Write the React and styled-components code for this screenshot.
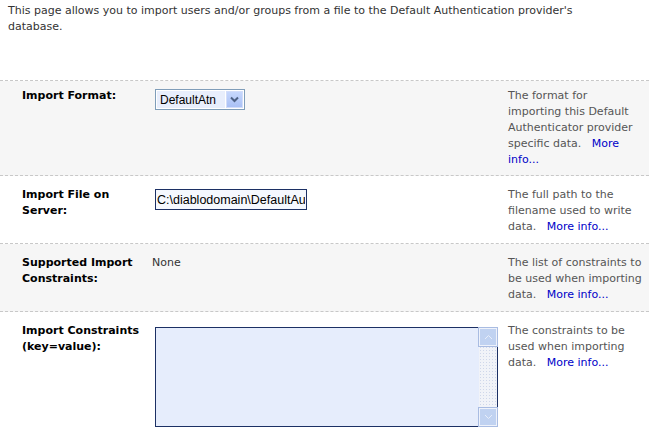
import React from 'react';
import styled, {createGlobalStyle} from 'styled-components';

const GlobalStyle = createGlobalStyle`
    body{
        margin: 0;
        background: #fff;
        font-family: "DejaVu Sans", Verdana, sans-serif;
        font-size: 11px;
    }
`;

const Page = styled.div`
    width: 649px;
`;

const Intro = styled.p`
    margin: 3px 8px 0;
    height: 77px;
    line-height: 16px;
    color: #333;
`;

const Form = styled.div`
    border-top: 1px dashed #c8c8c8;
`;

const Row = styled.div`
    display: grid;
    grid-template-columns: 130px 356px 1fr;
    padding: ${props => props.$first ? '7px' : '11px'} 0 ${props => props.$first ? '7px' : '8px'} 22px;
    background: ${props => props.$shaded ? '#f6f6f6' : '#fff'};
    border-bottom: 1px dashed #c8c8c8;
    line-height: 16px;
`;

const Label = styled.div`
    font-weight: bold;
    color: #000;
    white-space: nowrap;
`;

const Value = styled.div`
    color: #333;
`;

const Desc = styled.div`
    color: #555;
    white-space: nowrap;
`;

const MoreLink = styled.a`
    color: #0000c8;
    text-decoration: none;
`;

const SelectBox = styled.div`
    display: flex;
    align-items: center;
    box-sizing: border-box;
    width: 90px;
    height: 21px;
    margin: 1px 0 0 3px;
    padding: 1px;
    border: 1px solid #7f9db9;
    background: #fff;
    font-family: "Liberation Sans", Arial, sans-serif;
    font-size: 12px;
    color: #000;
`;

const SelectText = styled.span`
    flex: 1;
    align-self: stretch;
    display: flex;
    align-items: center;
    padding-left: 3px;
    background: #e8eefc;
`;

const DropButton = styled.span`
    display: flex;
    align-items: center;
    justify-content: center;
    width: 17px;
    height: 17px;
    margin-left: 1px;
    background: linear-gradient(#c6d7fd, #aac1f5);
    border: 1px solid #d2ddfa;
    box-sizing: border-box;
`;

const PathInput = styled.input`
    display: block;
    box-sizing: border-box;
    width: 152px;
    height: 21px;
    margin: 2px 0 0 3px;
    padding: 0 1px;
    border: 1px solid #1c3064;
    background: #f5f8fe;
    font-family: "Liberation Sans", Arial, sans-serif;
    font-size: 12.5px;
    color: #000;
    outline: none;
`;

const AreaBox = styled.div`
    display: flex;
    box-sizing: border-box;
    width: 343px;
    height: 100px;
    margin: 4px 0 0 3px;
    border: 1px solid #1c3064;
    background: #e6edfc;
`;

const TextArea = styled.textarea`
    flex: 1;
    border: none;
    background: transparent;
    resize: none;
    outline: none;
    padding: 2px;
`;

const ScrollRail = styled.div`
    display: flex;
    flex-direction: column;
    justify-content: space-between;
    width: 18px;
    background-color: #f1f3f8;
    background-image: radial-gradient(#cfd7ea 0.6px, transparent 0.8px);
    background-size: 3px 3px;
`;

const ScrollButton = styled.div`
    display: flex;
    align-items: center;
    justify-content: center;
    height: 18px;
    box-sizing: border-box;
    border: 1px solid #eef2fb;
    outline: 1px solid #a9bce2;
    background: #c0d2f1;
`;

function Chevron() {
    return (
        <svg width="9" height="7" viewBox="0 0 9 7">
            <path d="M1 1.5 L4.5 5 L8 1.5" fill="none" stroke="#4d6185" strokeWidth="2" />
        </svg>
    );
}

function FaintArrow({up}) {
    return (
        <svg width="9" height="6" viewBox="0 0 9 6">
            <path d={up ? 'M1 5 L4.5 1.5 L8 5' : 'M1 1 L4.5 4.5 L8 1'} fill="none" stroke="#e8eefa" strokeWidth="1" />
        </svg>
    );
}

function Info({children}) {
    return (
        <Desc>
            {children}&nbsp;&nbsp;&nbsp;<MoreLink href="#">More info...</MoreLink>
        </Desc>
    );
}

function App() {
    return (
        <Page>
            <GlobalStyle />
            <Intro>
                This page allows you to import users and/or groups from a file to the Default Authentication provider's<br />
                database.
            </Intro>
            <Form>
                <Row $shaded $first>
                    <Label>Import Format:</Label>
                    <Value>
                        <SelectBox>
                            <SelectText>DefaultAtn</SelectText>
                            <DropButton><Chevron /></DropButton>
                        </SelectBox>
                    </Value>
                    <Desc>
                        The format for<br />
                        importing this Default<br />
                        Authenticator provider<br />
                        specific data.&nbsp;&nbsp;&nbsp;<MoreLink href="#">More</MoreLink><br />
                        <MoreLink href="#">info...</MoreLink>
                    </Desc>
                </Row>
                <Row>
                    <Label>Import File on<br />Server:</Label>
                    <Value>
                        <PathInput defaultValue={'C:\\diablodomain\\DefaultAuthenticator.dat'} />
                    </Value>
                    <Info>
                        The full path to the<br />
                        filename used to write<br />
                        data.
                    </Info>
                </Row>
                <Row $shaded>
                    <Label>Supported Import<br />Constraints:</Label>
                    <Value>None</Value>
                    <Info>
                        The list of constraints to<br />
                        be used when importing<br />
                        data.
                    </Info>
                </Row>
                <Row>
                    <Label>Import Constraints<br />(key=value):</Label>
                    <Value>
                        <AreaBox>
                            <TextArea />
                            <ScrollRail>
                                <ScrollButton><FaintArrow up /></ScrollButton>
                                <ScrollButton><FaintArrow /></ScrollButton>
                            </ScrollRail>
                        </AreaBox>
                    </Value>
                    <Info>
                        The constraints to be<br />
                        used when importing<br />
                        data.
                    </Info>
                </Row>
            </Form>
        </Page>
    );
}

export default App;
